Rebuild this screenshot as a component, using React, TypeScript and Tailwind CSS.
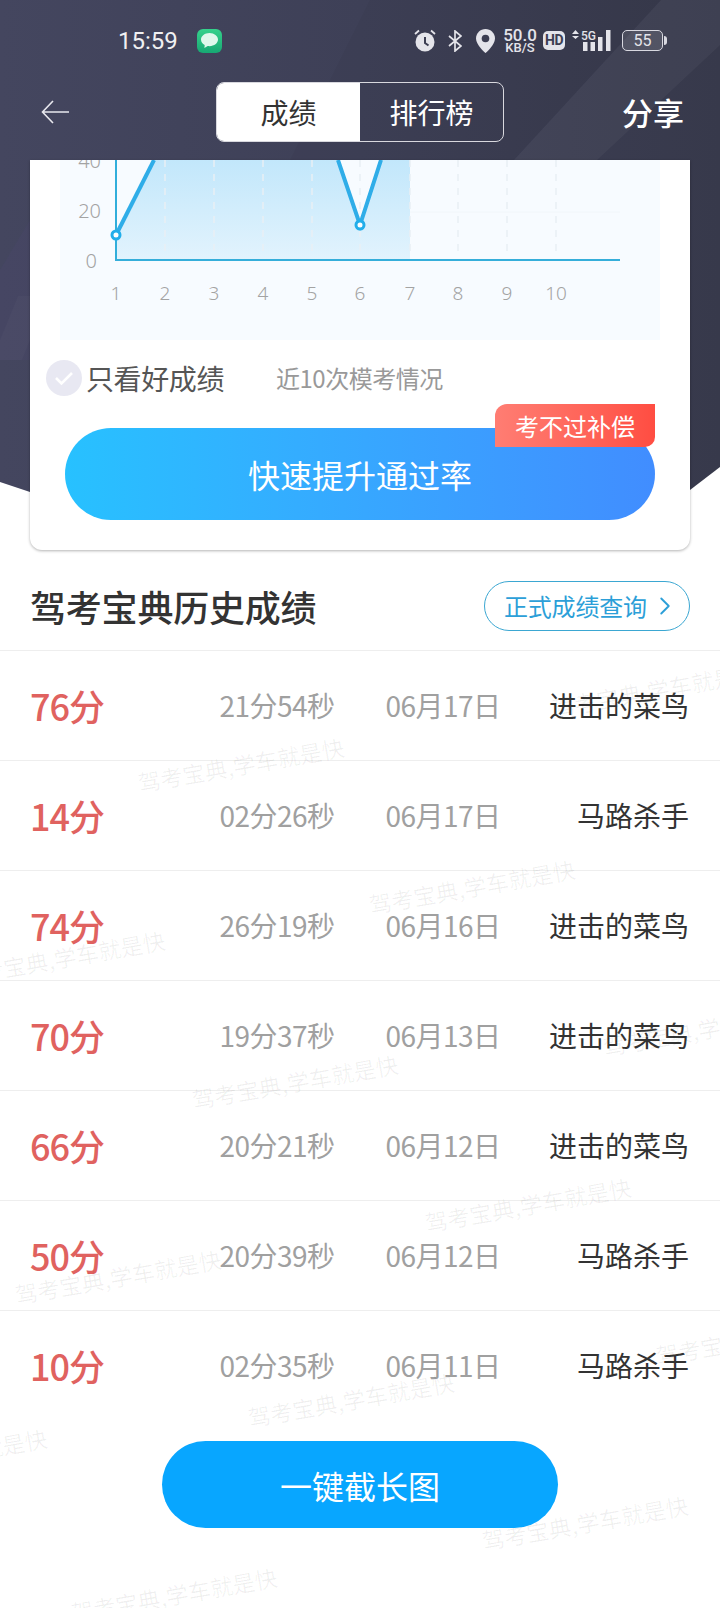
import { ChevronRight } from "lucide-react";

const records = [
  { score: "76分", time: "21分54秒", date: "06月17日", title: "进击的菜鸟" },
  { score: "14分", time: "02分26秒", date: "06月17日", title: "马路杀手" },
  { score: "74分", time: "26分19秒", date: "06月16日", title: "进击的菜鸟" },
  { score: "70分", time: "19分37秒", date: "06月13日", title: "进击的菜鸟" },
  { score: "66分", time: "20分21秒", date: "06月12日", title: "进击的菜鸟" },
  { score: "50分", time: "20分39秒", date: "06月12日", title: "马路杀手" },
  { score: "10分", time: "02分35秒", date: "06月11日", title: "马路杀手" },
];

// centre of each watermark stamp
const stamps = [
  [655, 690],
  [241, 765],
  [472, 887],
  [62, 958],
  [706, 1029],
  [295, 1082],
  [528, 1205],
  [118, 1277],
  [759, 1338],
  [351, 1400],
  [-56, 1456],
  [585, 1523],
  [174, 1595],
];

function Backdrop() {
  return (
    <div className="absolute inset-x-0 top-0 h-[500px] bg-gradient-to-r from-[#44465f] via-[#3e4057] to-[#37394b] [clip-path:polygon(0_0,100%_0,100%_467px,690px_490px,30px_492px,0_482px)]">
      <svg width="720" height="500" viewBox="0 0 720 500" className="block">
        <polygon points="370,0 661,0 514,160 290,160" fill="#000" fillOpacity="0.03" />
        <polygon points="661,0 720,0 720,45 597,160 514,160" fill="#fff" fillOpacity="0.04" />
        <polygon points="0,270 30,220 30,360 0,360" fill="#5a4f8a" fillOpacity="0.1" />
        <polygon points="18,296 30,296 30,340 22,360 0,360 0,340" fill="#fff" fillOpacity="0.025" />
      </svg>
    </div>
  );
}

function StatusIcons() {
  return (
    <div className="flex items-center text-[#e4e4ea]">
      <svg width="22" height="23" viewBox="0 0 22 23" fill="currentColor">
        <circle cx="11" cy="13" r="9.500" />
        <path d="M11 8v6l3.500 2.500" fill="none" stroke="#3c3e52" strokeWidth="2" />
        <path d="M1 5l4-3.500M21 5l-4-3.500" fill="none" stroke="currentColor" strokeWidth="1.800" />
      </svg>
      <svg width="14" height="22" viewBox="0 0 14 22" fill="none" stroke="currentColor" strokeWidth="1.700" className="ml-3">
        <path d="M1 6l12 10-6 5V1l6 5L1 16" />
      </svg>
      <svg width="19" height="24" viewBox="0 0 19 24" className="ml-3.5">
        <path d="M9.500 0C4.300 0 0 4.200 0 9.400 0 16 9.500 24 9.500 24S19 16 19 9.400C19 4.200 14.700 0 9.500 0z" fill="currentColor" />
        <circle cx="9.500" cy="9.500" r="3.800" fill="#3c3e52" />
      </svg>
      <div className="ml-2 flex w-[34px] flex-col items-center font-['Roboto',sans-serif] font-medium">
        <span className="text-[17px] leading-[13px]">50.0</span>
        <span className="text-[13px] leading-[11px]">KB/S</span>
      </div>
      <span className="ml-1.5 flex h-[19px] w-[22px] items-center justify-center rounded-[5px] bg-[#e4e4ea] font-['Roboto',sans-serif] text-[14px] font-bold tracking-[-0.5px] text-[#3c3e52]">
        HD
      </span>
      <svg width="41" height="22" viewBox="0 0 41 22" className="ml-[7px]" fill="currentColor">
        <path d="M0 4l3.500-4L7 4zM0 6h7l-3.500 3z" />
        <rect x="11" y="12" width="4.500" height="9" />
        <rect x="18.500" y="12" width="4.500" height="9" />
        <rect x="26" y="7" width="4.500" height="14" />
        <rect x="34" y="0" width="4.500" height="21" />
        <text x="9" y="9.500" fontSize="12" fontWeight="500" fontFamily="Roboto, sans-serif">5G</text>
      </svg>
      <div className="ml-[9px] flex items-center">
        <span className="flex h-[21px] w-[41px] items-center justify-center rounded-[5px] border border-[#d8d8e0] bg-white/10 font-['Roboto',sans-serif] text-[16px] leading-none">
          55
        </span>
        <span className="ml-px h-[9px] w-[3px] rounded-r-sm bg-[#d8d8e0]" />
      </div>
    </div>
  );
}

function Chart() {
  const xs = [56, 105, 154, 203, 252, 300, 350, 398, 447, 496];
  return (
    <svg width="600" height="180" viewBox="0 0 600 180" className="block">
      <defs>
        <linearGradient id="area" x1="0" y1="0" x2="0" y2="1">
          <stop offset="0" stopColor="#c2e7fb" />
          <stop offset="1" stopColor="#e2f3fd" />
        </linearGradient>
      </defs>
      <polygon points="56,100 56,75 94,0 278,0 300,65 321,0 350,0 350,100" fill="url(#area)" />
      <line x1="350" y1="52" x2="560" y2="52" stroke="#f1f6fa" strokeWidth="1" />
      {xs.slice(1).map((x) => (
        <line key={x} x1={x} y1="0" x2={x} y2="96" stroke="#e9eff4" strokeWidth="1.500" strokeDasharray="7 7" />
      ))}
      <polyline points="56,75 94,0" fill="none" stroke="#2fade8" strokeWidth="4" />
      <polyline points="278,0 300,65 321,0" fill="none" stroke="#2fade8" strokeWidth="4" />
      <line x1="56" y1="0" x2="56" y2="101" stroke="#31aedb" strokeWidth="2" />
      <line x1="55" y1="100" x2="560" y2="100" stroke="#35aeda" strokeWidth="2" />
      <circle cx="56" cy="75" r="4" fill="#fff" stroke="#22aeea" strokeWidth="3" />
      <circle cx="300" cy="65" r="4" fill="#fff" stroke="#22aeea" strokeWidth="3" />
      <g fontFamily="'Noto Sans', sans-serif" fontSize="20" fontWeight="300" fill="#a3a3a3">
        <text x="41" y="8" textAnchor="end">40</text>
        <text x="41" y="58" textAnchor="end">20</text>
        <text x="37" y="108" textAnchor="end">0</text>
        {xs.map((x, i) => (
          <text key={x} x={x} y="140" textAnchor="middle" fontSize="19">{i + 1}</text>
        ))}
      </g>
    </svg>
  );
}

export default function App() {
  return (
    <div className="relative h-[1608px] w-[720px] overflow-hidden bg-white font-['Noto_Sans_CJK_SC','Noto_Sans',sans-serif]">
      <Backdrop />

      <header className="relative h-[160px] text-white">
        <div className="flex h-[82px] items-center justify-between pb-[1px] pl-[118px] pr-[53px]">
          <div className="flex items-center">
            <span className="font-['Roboto',sans-serif] text-[24px] text-[#f0f0f2]">15:59</span>
            <span className="ml-[19px] flex h-[24px] w-[25px] items-center justify-center rounded-[6px] bg-gradient-to-b from-[#35d28c] to-[#17a873]">
              <svg width="17" height="15" viewBox="0 0 17 15">
                <path d="M8.500 0C3.800 0 0 2.900 0 6.600c0 2.300 1.500 4.300 3.700 5.500L3.400 15l3.300-1.900c.6.100 1.200.1 1.800.1 4.700 0 8.500-3 8.500-6.600S13.200 0 8.500 0z" fill="#dff8ec" />
              </svg>
            </span>
          </div>
          <StatusIcons />
        </div>

        <div className="flex h-[60px] items-center justify-between pl-[41px] pr-[36px]">
          <svg width="28" height="24" viewBox="0 0 28 24" fill="none" stroke="#e8e8ee" strokeWidth="1.600">
            <path d="M28 12H1.500M12 1L1.500 12 12 23" />
          </svg>
          <div className="ml-[29px] flex h-[60px] w-[288px] overflow-hidden rounded-[8px] border border-[#d8d8de]">
            <span className="flex w-[143px] items-center justify-center bg-white text-[28px] text-[#333]">成绩</span>
            <span className="flex flex-1 items-center justify-center text-[28px] text-white">排行榜</span>
          </div>
          <span className="text-[31px] font-medium">分享</span>
        </div>
      </header>

      <section className="relative mx-[30px] overflow-hidden rounded-b-[12px] bg-white pb-[30px] shadow-[0_1px_3px_rgba(0,0,0,0.3)]">
        <div className="mx-[30px] h-[180px] bg-[#f7fbff]">
          <Chart />
        </div>

        <div className="ml-[16px] mt-[20px] flex h-[36px] items-center">
          <span className="flex h-[36px] w-[36px] items-center justify-center rounded-full bg-[#e8e8f2]">
            <svg width="20" height="16" viewBox="0 0 20 16" fill="none" stroke="#fff" strokeWidth="2.600">
              <path d="M2 8l5.500 5.500L18 3" />
            </svg>
          </span>
          <span className="ml-[4px] text-[28px] tracking-[-0.4px] text-[#555]">只看好成绩</span>
          <span className="ml-[52px] text-[24px] tracking-[-0.5px] text-[#999]">近10次模考情况</span>
        </div>

        <div className="relative mx-[35px] mt-[32px] flex h-[92px] items-center justify-center rounded-full bg-gradient-to-r from-[#27c1ff] to-[#418dff] text-[32px] text-white">
          快速提升通过率
        </div>
      </section>

      <div className="flex h-[100px] items-center justify-between pl-[30px] pr-[30px] pt-[12px]">
        <h2 className="text-[36px] font-medium tracking-[-0.2px] text-[#333]">驾考宝典历史成绩</h2>
        <div className="flex h-[50px] w-[206px] items-center rounded-full border border-[#3ba7d2] pl-[19px] text-[24px] tracking-[-0.2px] text-[#2c9fd8]">
          正式成绩查询
          <ChevronRight size={30} strokeWidth={1.5} className="ml-[3px]" />
        </div>
      </div>

      <ul>
        {records.map((r, i) => (
          <li key={i} className="flex h-[110px] items-center border-t border-[#eeeeee] pb-[2px] pl-[30px] pr-[31px]">
            <span className="w-[182px] text-[36px] font-medium tracking-[-1px] text-[#e0625f]">{r.score}</span>
            <span className="w-[130px] text-center text-[28px] tracking-[-0.5px] text-[#a0a0a0]">{r.time}</span>
            <span className="ml-[36px] w-[130px] text-center text-[28px] tracking-[-0.5px] text-[#a0a0a0]">{r.date}</span>
            <span className="ml-auto text-[28px] text-[#333]">{r.title}</span>
          </li>
        ))}
      </ul>

      <div className="pointer-events-none absolute right-[65px] top-[404px] flex h-[43px] w-[160px] items-center justify-center rounded-br-[10px] rounded-tl-[12px] bg-gradient-to-r from-[#ff7d73] to-[#ff4d42] text-[24px] text-white">
        考不过补偿
      </div>

      {stamps.map(([x, y]) => (
        <span
          key={`${x}-${y}`}
          className="pointer-events-none absolute -translate-x-1/2 -translate-y-1/2 -rotate-[10deg] whitespace-nowrap text-[22.5px] text-black/[0.06]"
          style={{ left: x, top: y }}
        >
          驾考宝典,学车就是快
        </span>
      ))}

      <button className="absolute left-[162px] top-[1441px] h-[87px] w-[396px] rounded-full bg-[#08a6ff] text-[32px] text-white">
        一键截长图
      </button>
    </div>
  );
}
